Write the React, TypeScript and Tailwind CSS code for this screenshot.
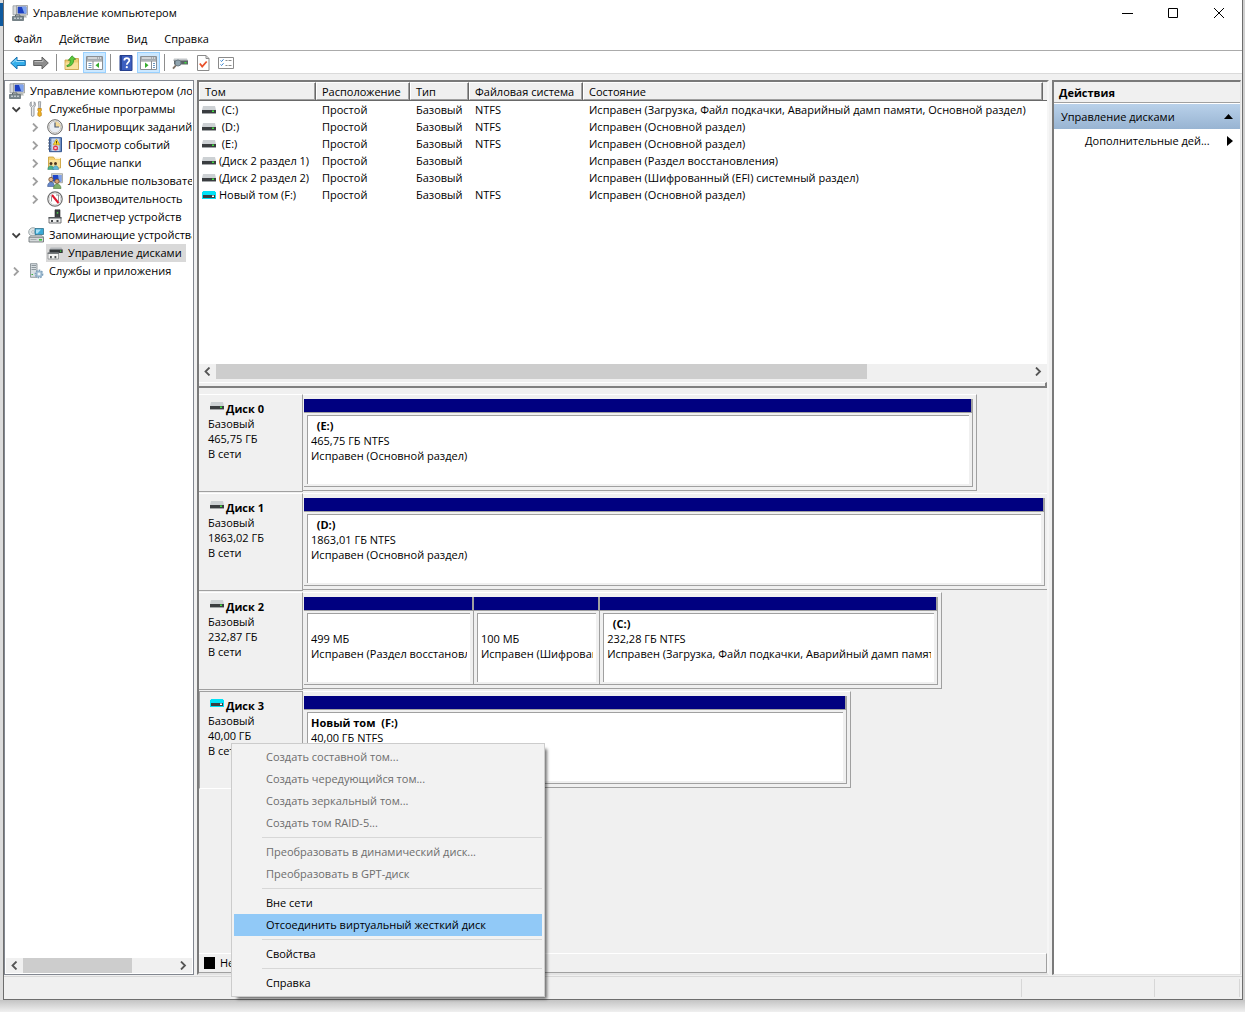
import React from "react";

type IconProps = { className?: string };

const ComputerIcon = ({ className = "w-4 h-4" }: IconProps) => (
  <svg className={`${className} shrink-0`} viewBox="0 0 16 16">
    <path d="M1 .8h4.500v9H1z" fill="#d6d9db" stroke="#8b9196" strokeWidth=".7" />
    <path d="M4.500 .5h11v9.500h-11z" fill="#dcdcd4" stroke="#8e918f" strokeWidth=".7" />
    <path d="M5.700 1.700h8.600v6.800H5.700z" fill="#1b3fc2" />
    <path d="M9.800 1.700h4.500v6.800h-2z" fill="#7fa4ee" />
    <path d="M8.500 10h5l1.500 2.500H8.500z" fill="#b4b7b4" />
    <path d="M.5 11.500h11v4H.5z" fill="#77858c" stroke="#59656b" strokeWidth=".7" />
    <path d="M2 13.200h2M5 13.200h2M8 13.200h2" stroke="#e0e5e8" />
    <path d="M3.500 11.500V10h4.500v1.500" fill="none" stroke="#59656b" />
  </svg>
);

const ToolsIcon = () => (
  <svg className="w-4 h-4 shrink-0" viewBox="0 0 16 16">
    <path d="M3.200.8v3.400l1.500 1.200 1.500-1.200V.8c1.500 1.200 1.900 4-.2 5.500v7.800c0 1.700-2.600 1.700-2.600 0V6.300C1.300 4.800 1.700 2 3.200.8z" fill="#e8eaec" stroke="#7c8288" strokeWidth=".8" />
    <path d="M10.500.7h2.200l-.4 7h-1.400z" fill="#d7dadd" stroke="#7c8288" strokeWidth=".7" />
    <path d="M9.900 7.500h3.400v2.200l-.7 1 .7 1.300v2.600q-1.700 1.600-3.400 0V12l.7-1.300-.7-1z" fill="#f0b323" stroke="#b97a0b" strokeWidth=".7" />
  </svg>
);

const ClockIcon = () => (
  <svg className="w-4 h-4 shrink-0" viewBox="0 0 16 16">
    <circle cx="8" cy="8" r="7.300" fill="#f2f0ea" stroke="#686868" />
    <circle cx="8" cy="8" r="5.800" fill="#e9edf3" stroke="#bdbdbd" strokeWidth=".8" />
    <path d="M8 2.500A5.500 5.500 0 0 1 13.500 8H8z" fill="#f3d99a" />
    <path d="M8 3.500V8h4" fill="none" stroke="#4b5b76" strokeWidth="1.200" />
  </svg>
);

const EventsIcon = () => (
  <svg className="w-4 h-4 shrink-0" viewBox="0 0 16 16">
    <path d="M2.500.7h12v14h-12z" fill="#6f8fc4" stroke="#33558f" />
    <path d="M4.500 1.500h8v12.500h-8z" fill="#c8d6ec" />
    <path d="M6 4h5M6 7h6M5.500 12.500h6" stroke="#8ea6cf" strokeWidth=".8" />
    <path d="M1 3h3M1 6h3M1 9h3M1 12h3" stroke="#55627a" />
    <path d="M9.500 2l3.300 5.800H6.200z" fill="#ffd633" stroke="#c79a00" strokeWidth=".6" />
    <path d="M9.500 4v2M9.500 6.500v.8" stroke="#3c3000" strokeWidth=".9" />
    <circle cx="8.500" cy="11" r="2.500" fill="#e0344b" />
    <path d="M7.500 10l2 2M9.500 10l-2 2" stroke="#fff" strokeWidth=".9" />
  </svg>
);

const SharedFolderIcon = () => (
  <svg className="w-4 h-4 shrink-0" viewBox="0 0 16 16">
    <path d="M1.500 2h5l1 1.500h6V13h-12z" fill="#f4cf6d" stroke="#c79b31" strokeWidth=".8" />
    <path d="M8 2.500h5v1.500H8z" fill="#fff3cf" />
    <path d="M2 5h11v7.500H2z" fill="#fae29a" />
    <circle cx="4" cy="8.500" r="1.500" fill="#4c3520" />
    <circle cx="8.500" cy="8.500" r="1.500" fill="#4c3520" />
    <path d="M.8 14.500c0-5 6-5 6 0z" fill="#49b08c" stroke="#2b7d60" strokeWidth=".5" />
    <path d="M5.800 14.500c0-5 5.800-5 5.800 0z" fill="#63b9d8" stroke="#2f7d9c" strokeWidth=".5" />
  </svg>
);

const UsersIcon = () => (
  <svg className="w-4 h-4 shrink-0" viewBox="0 0 16 16">
    <path d="M4.500.7h11v9h-11z" fill="#d8d8d0" stroke="#8e918f" strokeWidth=".7" />
    <path d="M5.700 2h8.600v6.500H5.700z" fill="#1d45c7" />
    <path d="M11 2h3.300v6.500H12z" fill="#7fa4ee" />
    <circle cx="4" cy="6.500" r="2.200" fill="#e2b48a" stroke="#6d4a2a" strokeWidth=".8" />
    <circle cx="10" cy="8.300" r="2.200" fill="#d9a273" stroke="#6d4a2a" strokeWidth=".8" />
    <path d="M.6 13.500c0-6 6.800-6 6.800 0z" fill="#6688c9" stroke="#3b5691" strokeWidth=".6" />
    <path d="M6.500 15.500c0-6 7.500-6 7.500 0z" fill="#7fb06a" stroke="#4d7c3b" strokeWidth=".6" />
  </svg>
);

const PerformanceIcon = () => (
  <svg className="w-4 h-4 shrink-0" viewBox="0 0 16 16">
    <circle cx="8" cy="8" r="7.200" fill="#fff" stroke="#6d6d6d" strokeWidth="1.200" />
    <circle cx="8" cy="8" r="5.800" fill="none" stroke="#c9c9c9" strokeWidth=".8" />
    <path d="M4.500 10.500V5.500l2-1M9 4h2.500v6.500" fill="none" stroke="#777" strokeWidth=".8" />
    <path d="M5 4l6.500 8" stroke="#e0182d" strokeWidth="2" />
  </svg>
);

const DeviceIcon = () => (
  <svg className="w-4 h-4 shrink-0" viewBox="0 0 16 16">
    <path d="M8 .8h5V9H8z" fill="#3c4043" stroke="#222" strokeWidth=".6" />
    <path d="M9.800 3.200h1.400v1.400H9.800z" fill="#4ce04c" />
    <path d="M2 8.500h12V14H2z" fill="#eeefef" stroke="#55595c" strokeWidth=".8" />
    <path d="M1.500 8h13v1.500h-13z" fill="#55595c" />
    <path d="M4 11h2v2H4zM9.500 11h2v2h-2z" fill="#44484b" />
  </svg>
);

const StorageIcon = () => (
  <svg className="w-4 h-4 shrink-0" viewBox="0 0 16 16">
    <circle cx="5" cy="5" r="4.300" fill="#dfe5e6" stroke="#8b9698" strokeWidth=".8" />
    <circle cx="5" cy="5" r="1.300" fill="#fff" stroke="#8b9698" strokeWidth=".6" />
    <path d="M7 1.500h8.500V7.500H7z" fill="#39a9d6" stroke="#31718c" strokeWidth=".8" />
    <path d="M8 2.500h5L9.500 6.500H8z" fill="#a9e0f5" />
    <path d="M1.500 10L3 8.500h11l1.500 1.500z" fill="#f2f3f3" stroke="#858b8e" strokeWidth=".6" />
    <path d="M1 10.200h14.500v4.800H1z" fill="#d4d8da" stroke="#63696c" strokeWidth=".8" />
    <path d="M11 12h3v1.600h-3z" fill="#37c637" />
    <path d="M2.500 12.500h6" stroke="#a5abae" />
  </svg>
);

const DiskManagementIcon = () => (
  <svg className="w-4 h-4 shrink-0" viewBox="0 0 16 16">
    <path d="M3.500 2.500h11L15.700 5H2.500z" fill="#b4b8bb" />
    <path d="M2.500 4.500h13.200V8H2.500z" fill="#33373a" />
    <path d="M13 5.500h1.300v1.300H13z" fill="#45e045" />
    <path d="M1 8h10.500v6H1z" fill="#f4f4f4" stroke="#8a8e91" strokeWidth=".8" />
    <path d="M.6 7.500h11.400v1.500H.6z" fill="#75797c" />
    <path d="M3 11h1.800v2.200H3zM7.500 11h1.800v2.200H7.500z" fill="#4f5356" />
  </svg>
);

const ServicesIcon = () => (
  <svg className="w-4 h-4 shrink-0" viewBox="0 0 16 16">
    <path d="M2.500.7h6.500v13.600H2.500z" fill="#d9dfe3" stroke="#7b858b" strokeWidth=".8" />
    <path d="M3.500 2.500h4.500M3.500 4.500h4.500M3.500 6.500h4.500" stroke="#7b858b" strokeWidth=".8" />
    <path d="M3.500 11.500h1.500" stroke="#35b335" strokeWidth="1.200" />
    <circle cx="11" cy="11" r="3.600" fill="#b9cfe0" stroke="#7d9fba" strokeWidth="1.600" strokeDasharray="1.600 1.100" />
    <circle cx="11" cy="11" r="2.700" fill="#b9cfe0" stroke="#7d9fba" strokeWidth=".6" />
    <circle cx="11" cy="11" r="1.100" fill="#fff" />
  </svg>
);

const DriveIcon = ({ virtual, className = "" }: { virtual?: boolean; className?: string }) => (
  <svg className={`w-[14px] h-[8px] shrink-0 ${className}`} viewBox="0 0 14 8">
    <path d="M1 0h12l1 4H0z" fill={virtual ? "#00e1f5" : "#cdd1d4"} />
    {virtual && <path d="M0 1h14v7H0z" fill="#00e1f5" />}
    <path d={virtual ? "M1 4h12v3H1z" : "M0 4h14v3H0z"} fill="#3a3d40" />
    {!virtual && <path d="M0 7h14v1H0z" fill="#a3a6a8" />}
    <path d="M10 4.500h2V6h-2z" fill={virtual ? "#fff" : "#3fe03f"} />
  </svg>
);

const BackIcon = () => (
  <svg className="w-4 h-4" viewBox="0 0 16 16">
    <path d="M.7 8L7 2v3.500h8.300v5H7V14z" fill="#35aeea" stroke="#1a71ad" />
    <path d="M2.500 8L6 4.500v2h8" fill="none" stroke="#9cdcfb" />
  </svg>
);

const ForwardIcon = () => (
  <svg className="w-4 h-4" viewBox="0 0 16 16">
    <path d="M15.300 8L9 2v3.500H.7v5H9V14z" fill="#8d8d8d" stroke="#606060" />
    <path d="M1.500 6.500h8.500v-2" fill="none" stroke="#bdbdbd" />
  </svg>
);

const UpFolderIcon = () => (
  <svg className="w-4 h-4" viewBox="0 0 16 16">
    <path d="M1 5h5l1-1.500h7.500V14.500H1z" fill="#f0cd75" stroke="#c59a3c" strokeWidth=".8" />
    <path d="M1.500 7.500h12.600V14H1.500z" fill="#f9e09a" />
    <path d="M2.800 10.500C5.500 10 6.500 8 6.200 5L4.300 5.300 8 .8l3.700 3.400-2 .3C9.800 9 7 11.500 3 11.500z" fill="#5cc940" stroke="#2b8a1c" strokeWidth=".7" />
  </svg>
);

const PaneIcon = ({ flip }: { flip?: boolean }) => (
  <svg className="w-[17px] h-4" viewBox="0 0 17 16">
    <path d="M.5 1.500h16v13H.5z" fill="#fff" stroke="#8b8f93" />
    <path d="M1 2h15v3.500H1z" fill="#a5abb0" />
    <path d="M2 3h9M12 3h1M14 3h1" stroke="#fff" />
    <path d="M.5 6h16" stroke="#8b8f93" />
    <path d={flip ? "M11.500 6v8.500" : "M7 6v8.500"} stroke="#8b8f93" />
    <path d={flip ? "M13 8.500h2M13 10.500h2M13 12.500h2" : "M2.500 8.500h3M2.500 10.500h3M2.500 12.500h3"} stroke="#6a97c2" />
    <path d={flip ? "M5 7.500v5.500l3.500-2.800z" : "M13 7.500v5.500l-3.500-2.800z"} fill="#35ad2d" />
  </svg>
);

const HelpIcon = () => (
  <svg className="w-4 h-4" viewBox="0 0 16 16">
    <path d="M2 .5h12v15H2z" fill="#3d5fc0" stroke="#26408e" />
    <path d="M2 .5h2v15H2z" fill="#26408e" />
    <path d="M6.300 5.500c0-3.200 5-3.200 5 0 0 1.900-2.500 2-2.500 4.300" fill="none" stroke="#fff" strokeWidth="1.700" />
    <circle cx="8.800" cy="12.200" r="1.100" fill="#fff" />
  </svg>
);

const RescanIcon = () => (
  <svg className="w-4 h-4" viewBox="0 0 16 16">
    <path d="M2 3.500h13l1 2.500H1z" fill="#c3c7ca" />
    <path d="M2 5.500h14V9.500H2z" fill="#5b6367" />
    <path d="M12.500 7h2v1.500h-2z" fill="#3fe03f" />
    <circle cx="6" cy="8" r="3" fill="#8fa3ae" stroke="#6b7a83" />
    <path d="M3.900 10.400L1 13.700" stroke="#7d7166" strokeWidth="1.800" />
  </svg>
);

const CheckPageIcon = () => (
  <svg className="w-4 h-4" viewBox="0 0 16 16">
    <path d="M2.500.5h8.500l3 3v12H2.500z" fill="#fff" stroke="#8a8a8a" />
    <path d="M11 .5v3h3" fill="none" stroke="#8a8a8a" />
    <path d="M4.800 8.500l2.400 3 4.500-5" fill="none" stroke="#e8502a" strokeWidth="1.800" />
  </svg>
);

const ListIcon = () => (
  <svg className="w-4 h-4" viewBox="0 0 16 16">
    <path d="M.5 2.500h15v11H.5z" fill="#fff" stroke="#8a8a8a" />
    <path d="M2.500 5.500l1 1 2-2.200M2.500 9.500l1 1 2-2.200" fill="none" stroke="#2f7fd0" />
    <path d="M7.500 5.500h2M10.500 5.500h3M7.500 10.500h2M10.500 10.500h3" stroke="#8a8a8a" />
  </svg>
);

const Chevron = ({ dir, className = "" }: { dir: "left" | "right" | "down"; className?: string }) => (
  <svg className={`w-[9px] h-[9px] shrink-0 ${className}`} viewBox="0 0 9 9" fill="none" stroke="currentColor">
    {dir === "down" && <path d="M.5 2.500l3.700 3.700 3.700-3.700" strokeWidth="1.800" />}
    {dir === "right" && <path d="M2 .5l4 4-4 4" strokeWidth="1.800" />}
    {dir === "left" && <path d="M6.500 .5l-4 4 4 4" strokeWidth="1.800" />}
  </svg>
);

type TreeNode = { label: string; level: 0 | 1 | 2; icon: React.ReactNode; state?: "open" | "closed"; selected?: boolean };

const tree: TreeNode[] = [
  { label: "Управление компьютером (локальным)", level: 0, icon: <ComputerIcon /> },
  { label: "Служебные программы", level: 1, icon: <ToolsIcon />, state: "open" },
  { label: "Планировщик заданий", level: 2, icon: <ClockIcon />, state: "closed" },
  { label: "Просмотр событий", level: 2, icon: <EventsIcon />, state: "closed" },
  { label: "Общие папки", level: 2, icon: <SharedFolderIcon />, state: "closed" },
  { label: "Локальные пользователи", level: 2, icon: <UsersIcon />, state: "closed" },
  { label: "Производительность", level: 2, icon: <PerformanceIcon />, state: "closed" },
  { label: "Диспетчер устройств", level: 2, icon: <DeviceIcon /> },
  { label: "Запоминающие устройства", level: 1, icon: <StorageIcon />, state: "open" },
  { label: "Управление дисками", level: 2, icon: <DiskManagementIcon />, selected: true },
  { label: "Службы и приложения", level: 1, icon: <ServicesIcon />, state: "closed" },
];

const volumes = [
  { name: "\u00a0(C:)", fs: "NTFS", status: "Исправен (Загрузка, Файл подкачки, Аварийный дамп памяти, Основной раздел)" },
  { name: "\u00a0(D:)", fs: "NTFS", status: "Исправен (Основной раздел)" },
  { name: "\u00a0(E:)", fs: "NTFS", status: "Исправен (Основной раздел)" },
  { name: "(Диск 2 раздел 1)", fs: "", status: "Исправен (Раздел восстановления)" },
  { name: "(Диск 2 раздел 2)", fs: "", status: "Исправен (Шифрованный (EFI) системный раздел)" },
  { name: "Новый том (F:)", fs: "NTFS", status: "Исправен (Основной раздел)", virtual: true },
];

type Partition = { name: string; size: string; status: string; share: number };
type Disk = { name: string; size: string; share: number; virtual?: boolean; partitions: Partition[] };

// share: bar length relative to the largest disk
const MAX_SHARE = 744;

const disks: Disk[] = [
  {
    name: "Диск 0",
    size: "465,75 ГБ",
    share: 674,
    partitions: [{ name: "\u00a0\u00a0(E:)", size: "465,75 ГБ NTFS", status: "Исправен (Основной раздел)", share: 1 }],
  },
  {
    name: "Диск 1",
    size: "1863,02 ГБ",
    share: 744,
    partitions: [{ name: "\u00a0\u00a0(D:)", size: "1863,01 ГБ NTFS", status: "Исправен (Основной раздел)", share: 1 }],
  },
  {
    name: "Диск 2",
    size: "232,87 ГБ",
    share: 639,
    partitions: [
      { name: "\u00a0", size: "499 МБ", status: "Исправен (Раздел восстановления)", share: 170 },
      { name: "\u00a0", size: "100 МБ", status: "Исправен (Шифрованный (EFI) системный раздел)", share: 126 },
      {
        name: "\u00a0\u00a0(C:)",
        size: "232,28 ГБ NTFS",
        status: "Исправен (Загрузка, Файл подкачки, Аварийный дамп памяти, Основной раздел)",
        share: 339,
      },
    ],
  },
  {
    name: "Диск 3",
    size: "40,00 ГБ",
    share: 548,
    virtual: true,
    partitions: [{ name: "Новый том\u00a0\u00a0(F:)", size: "40,00 ГБ NTFS", status: "Исправен (Основной раздел)", share: 1 }],
  },
];

const menuGroups = [
  {
    disabled: true,
    items: ["Создать составной том...", "Создать чередующийся том...", "Создать зеркальный том...", "Создать том RAID-5..."],
  },
  { disabled: true, items: ["Преобразовать в динамический диск...", "Преобразовать в GPT-диск"] },
  { items: ["Вне сети", "Отсоединить виртуальный жесткий диск"] },
  { items: ["Свойства"] },
  { items: ["Справка"] },
];

const TitleBar = () => (
  <header className="flex h-[26px] shrink-0 items-center bg-white pl-2">
    <ComputerIcon />
    <h1 className="ml-[5px] flex-1">Управление компьютером</h1>
    <button aria-label="Свернуть" className="flex h-[26px] w-[46px] items-center justify-center">
      <svg className="h-[11px] w-[11px]" viewBox="0 0 11 11" stroke="#000"><path d="M0 5.500h11" /></svg>
    </button>
    <button aria-label="Развернуть" className="flex h-[26px] w-[46px] items-center justify-center">
      <svg className="h-[11px] w-[11px]" viewBox="0 0 11 11" fill="none" stroke="#000"><path d="M.5.5h9v9h-9z" /></svg>
    </button>
    <button aria-label="Закрыть" className="flex h-[26px] w-[46px] items-center justify-center">
      <svg className="h-[11px] w-[11px]" viewBox="0 0 11 11" stroke="#000"><path d="M0 0l10 10M10 0L0 10" /></svg>
    </button>
  </header>
);

const ToolButton = ({ label, active, children }: { label: string; active?: boolean; children: React.ReactNode }) => (
  <button
    aria-label={label}
    aria-pressed={active}
    className={`flex h-[21px] w-[23px] items-center justify-center ${active ? "border border-[#99d1ff] bg-[#cce8ff]" : ""}`}
  >
    {children}
  </button>
);

const ToolSeparator = () => (
  <div className="flex w-2 justify-center py-[2px]">
    <div className="w-px bg-[#8d8d8d]" />
  </div>
);

const Toolbar = () => (
  <div role="toolbar" className="flex h-[23px] shrink-0 border-b border-[#dadada] bg-white pl-[2px] pt-px">
    <ToolButton label="Назад"><BackIcon /></ToolButton>
    <ToolButton label="Вперед"><ForwardIcon /></ToolButton>
    <ToolSeparator />
    <ToolButton label="Вверх"><UpFolderIcon /></ToolButton>
    <ToolButton label="Дерево консоли" active><PaneIcon /></ToolButton>
    <ToolSeparator />
    <ToolButton label="Справка"><HelpIcon /></ToolButton>
    <ToolButton label="Панель действий" active><PaneIcon flip /></ToolButton>
    <ToolSeparator />
    <ToolButton label="Повторить проверку"><RescanIcon /></ToolButton>
    <ToolButton label="Свойства"><CheckPageIcon /></ToolButton>
    <ToolButton label="Параметры"><ListIcon /></ToolButton>
  </div>
);

const ScrollBar = ({ thumb }: { thumb: string }) => (
  <div className="flex h-[15px] shrink-0 bg-[#f0f0f0] text-[#555]">
    <button aria-label="Прокрутить влево" className="flex w-[17px] items-center justify-center">
      <Chevron dir="left" />
    </button>
    <div className="flex-1">
      <div className={`h-full bg-[#cdcdcd] ${thumb}`} />
    </div>
    <button aria-label="Прокрутить вправо" className="flex w-[17px] items-center justify-center">
      <Chevron dir="right" />
    </button>
  </div>
);

const indent = { 0: "pl-[2px]", 1: "pl-[2px]", 2: "pl-[21px]" };

const TreePane = () => (
  <nav className="flex w-[190px] shrink-0 flex-col border border-[#828790] bg-white p-px">
    <ul className="flex-1 overflow-hidden">
      {tree.map((node) => (
        <li key={node.label} className={`flex h-[18px] items-center ${indent[node.level]}`}>
          {node.level > 0 && (
            <span className="flex w-[19px] shrink-0 justify-center pr-[2px]">
              {node.state === "open" && <Chevron dir="down" className="text-[#404040]" />}
              {node.state === "closed" && <Chevron dir="right" className="text-[#a0a0a0]" />}
            </span>
          )}
          <a
            href="#"
            className={`flex h-[18px] items-center gap-[5px] whitespace-nowrap pl-px pr-1 ${node.selected ? "bg-[#d9d9d9]" : ""}`}
          >
            {node.icon}
            {node.label}
          </a>
        </li>
      ))}
    </ul>
    <ScrollBar thumb="w-[72%]" />
  </nav>
);

const HeadCell = ({ children }: { children?: React.ReactNode }) => (
  <th className="h-[19px] border-b border-r border-t border-b-[#696969] border-r-[#696969] border-t-white bg-[#f0f0f0] p-0 text-left font-normal">
    <div className="h-[17px] overflow-hidden border-b border-l border-r border-b-[#a0a0a0] border-l-white border-r-[#a0a0a0] pl-[5px] leading-[18px]">
      {children}
    </div>
  </th>
);

const VolumeTable = () => (
  <div className="h-[282px] shrink-0 overflow-hidden bg-white">
    <table className="w-full table-fixed border-separate border-spacing-0 whitespace-nowrap">
      <colgroup>
        <col className="w-[117px]" />
        <col className="w-[94px]" />
        <col className="w-[59px]" />
        <col className="w-[114px]" />
        <col />
        <col className="w-1" />
      </colgroup>
      <thead>
        <tr>
          <HeadCell>Том</HeadCell>
          <HeadCell>Расположение</HeadCell>
          <HeadCell>Тип</HeadCell>
          <HeadCell>Файловая система</HeadCell>
          <HeadCell>Состояние</HeadCell>
          <td className="border-b border-[#696969] bg-[#f0f0f0]" />
        </tr>
      </thead>
      <tbody>
        {volumes.map((v) => (
          <tr key={v.name} className="h-[17px] leading-[17px]">
            <td className="p-0">
              <div className="flex items-center gap-[3px] pl-[3px]">
                <DriveIcon virtual={v.virtual} />
                {v.name}
              </div>
            </td>
            <td className="p-0 pl-[6px]">Простой</td>
            <td className="p-0 pl-[6px]">Базовый</td>
            <td className="p-0 pl-[6px]">{v.fs}</td>
            <td className="p-0 pl-[6px]">{v.status}</td>
            <td className="p-0" />
          </tr>
        ))}
      </tbody>
    </table>
  </div>
);

const ContextMenu = () => (
  <div
    role="menu"
    className="absolute left-8 top-[52px] z-10 w-[314px] border border-[#ccc] bg-[#f2f2f2] p-[2px] shadow-[4px_4px_3px_-2px_rgba(0,0,0,0.55)]"
  >
    {menuGroups.map((group, i) => (
      <div key={i}>
        {i > 0 && <div className="my-[3px] ml-7 h-px bg-[#d7d7d7]" />}
        {group.items.map((item) => (
          <button
            key={item}
            role="menuitem"
            disabled={group.disabled}
            className={`block h-[22px] w-full pl-8 text-left disabled:text-[#6d6d6d] ${
              item.startsWith("Отсоединить") ? "bg-[#91c9f7]" : ""
            }`}
          >
            {item}
          </button>
        ))}
      </div>
    ))}
  </div>
);

const PartitionBox = ({ part }: { part: Partition }) => (
  <div
    className="flex min-w-0 basis-0 flex-col border-b border-r border-[#a0a0a0]"
    style={{ flexGrow: part.share }}
  >
    <div className="h-[14px] shrink-0 border-b border-r border-[#a0a0a0] bg-[#000080]" />
    <div className="mx-[3px] my-[2px] flex-1 overflow-hidden whitespace-nowrap border-l border-t border-[#a0a0a0] bg-white px-[3px] pt-[2px] leading-[15px]">
      <div className="overflow-hidden">
        <p className="font-bold">{part.name}</p>
        <p>{part.size}</p>
        <p>{part.status}</p>
      </div>
    </div>
  </div>
);

const DiskRow = ({ disk, selected }: { disk: Disk; selected?: boolean }) => (
  <section className="relative flex h-[99px] pb-px">
    <div
      className={`w-[104px] shrink-0 border-b border-r border-t border-r-[#a0a0a0] pt-[6px] leading-[15px] ${
        selected ? "border-l border-b-white border-l-[#a0a0a0] border-t-[#a0a0a0] pl-2" : "border-b-[#a0a0a0] border-t-white pl-[9px]"
      }`}
    >
      <h2 className="flex gap-[2px] pl-[2px] font-bold">
        <DriveIcon virtual={disk.virtual} className="mt-px" />
        {disk.name}
      </h2>
      <p>Базовый</p>
      <p>{disk.size}</p>
      <p>В сети</p>
    </div>
    <div className="min-w-0 flex-1">
      <div
        className={`flex h-[97px] border-b border-t border-b-[#a0a0a0] border-t-white pb-[3px] pl-px pt-1 ${
          disk.share < MAX_SHARE ? "border-r border-r-[#a0a0a0] pr-[3px]" : "pr-[2px]"
        }`}
        style={{ width: `${(disk.share / MAX_SHARE) * 100}%` }}
      >
        {disk.partitions.map((part) => (
          <PartitionBox key={part.status} part={part} />
        ))}
      </div>
    </div>
    {selected && <ContextMenu />}
  </section>
);

const MainPane = () => (
  <main className="ml-[3px] flex min-w-0 flex-1 flex-col border-2 border-b-[#e3e3e3] border-l-[#7a7a7a] border-r-[#f6f6f6] border-t-[#7a7a7a]">
    <VolumeTable />
    <ScrollBar thumb="w-[80%]" />
    <div className="mt-[3px] h-[6px] shrink-0 border-b-2 border-r-2 border-t border-b-[#808080] border-r-[#808080] border-t-white" />
    <div className="flex-1 pt-[6px]">
      {disks.map((disk) => (
        <DiskRow key={disk.name} disk={disk} selected={disk.name === "Диск 3"} />
      ))}
    </div>
    <footer className="flex h-5 shrink-0 items-center gap-[5px] border-b border-r border-t border-b-[#a0a0a0] border-r-[#a0a0a0] border-t-white pl-[5px]">
      <span className="h-3 w-[11px] bg-black" />
      Не распределена
      <span className="ml-3 h-3 w-[11px] bg-[#000080]" />
      Основной раздел
    </footer>
  </main>
);

const ActionsPane = () => (
  <aside className="ml-[3px] mr-px w-[189px] shrink-0 border-b border-l-2 border-r border-t-2 border-b-[#e3e3e3] border-l-[#7a7a7a] border-r-[#e3e3e3] border-t-[#7a7a7a] bg-white">
    <h2 className="h-[21px] border-b border-[#a0a0a0] bg-[#f0f0f0] pl-[5px] font-bold leading-[21px]">Действия</h2>
    <button className="mt-px flex h-[25px] w-full items-center justify-between bg-linear-to-b from-[#b9d1ea] to-[#98b4d2] pl-[7px] pr-[7px]">
      Управление дисками
      <svg className="h-[5px] w-[9px]" viewBox="0 0 9 5"><path d="M4.500 0L9 5H0z" /></svg>
    </button>
    <button className="flex h-6 w-full items-center justify-between pl-[31px] pr-[7px]">
      Дополнительные дей...
      <svg className="h-[10px] w-[6px]" viewBox="0 0 6 10"><path d="M0 0l6 5-6 5z" /></svg>
    </button>
  </aside>
);

const StatusBar = () => (
  <div className="flex h-[23px] shrink-0 border-t border-[#d7d7d7] py-[2px]">
    <div className="flex-1 border-r border-[#d7d7d7]" />
    <div className="w-[133px] border-r border-[#d7d7d7]" />
    <div className="mr-[2px] w-[85px] border-r border-[#d7d7d7]" />
  </div>
);

export default function App() {
  return (
    <div className="flex h-screen min-h-[900px] flex-col bg-[#d0d0d0] font-['Open_Sans','Noto_Sans',sans-serif] text-[11px] leading-[16px] text-black">
      <div className="flex min-h-0 flex-1 pr-[2px]">
        {/* Sliver of the window behind */}
        <div className="w-[3px] shrink-0 bg-[#dcdcdc] pt-[3px]">
          <div className="h-[23px] bg-[#0f5a9f]" />
        </div>
        <div className="flex min-w-0 flex-1 flex-col border-x border-b border-[#6d6d6d] bg-[#f0f0f0]">
          <TitleBar />
          <nav className="flex h-[25px] shrink-0 items-center gap-[17px] border-b border-[#ababab] bg-white pl-[10px] pt-[2px]">
            <button>Файл</button>
            <button>Действие</button>
            <button>Вид</button>
            <button>Справка</button>
          </nav>
          <Toolbar />
          <div className="flex min-h-0 flex-1 pb-px pt-[6px]">
            <TreePane />
            <MainPane />
            <ActionsPane />
          </div>
          <StatusBar />
        </div>
      </div>
      <div className="h-3 shrink-0 bg-linear-to-b from-[#c4c4c4] to-[#f0f0f0]" />
    </div>
  );
}
